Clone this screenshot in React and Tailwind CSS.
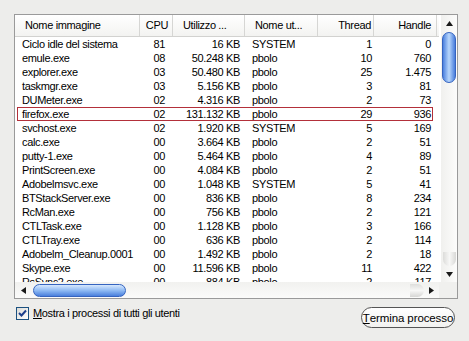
import React from "react";

const rows = [
  ["Ciclo idle del sistema", "81", "16 KB", "SYSTEM", "1", "0"],
  ["emule.exe", "08", "50.248 KB", "pbolo", "10", "760"],
  ["explorer.exe", "03", "50.480 KB", "pbolo", "25", "1.475"],
  ["taskmgr.exe", "03", "5.156 KB", "pbolo", "3", "81"],
  ["DUMeter.exe", "02", "4.316 KB", "pbolo", "2", "73"],
  ["firefox.exe", "02", "131.132 KB", "pbolo", "29", "936"],
  ["svchost.exe", "02", "1.920 KB", "SYSTEM", "5", "169"],
  ["calc.exe", "00", "3.664 KB", "pbolo", "2", "51"],
  ["putty-1.exe", "00", "5.464 KB", "pbolo", "4", "89"],
  ["PrintScreen.exe", "00", "4.084 KB", "pbolo", "2", "51"],
  ["Adobelmsvc.exe", "00", "1.048 KB", "SYSTEM", "5", "41"],
  ["BTStackServer.exe", "00", "836 KB", "pbolo", "8", "234"],
  ["RcMan.exe", "00", "756 KB", "pbolo", "2", "121"],
  ["CTLTask.exe", "00", "1.128 KB", "pbolo", "3", "166"],
  ["CTLTray.exe", "00", "636 KB", "pbolo", "2", "114"],
  ["Adobelm_Cleanup.0001", "00", "1.492 KB", "pbolo", "2", "18"],
  ["Skype.exe", "00", "11.596 KB", "pbolo", "11", "422"],
  ["RsSync2.exe", "00", "884 KB", "pbolo", "2", "117"],
];

const headCls = [
  "w-[125px] pl-[10px] text-left",
  "w-[33px] pr-[4px] text-right",
  "w-[72px] pl-[10px] text-left",
  "w-[73px] pl-[10px] text-left",
  "w-[56px] pr-[2px] text-right",
  "w-[63px] pr-[5px] text-right",
];
const cellCls = [
  "w-[125px] pl-[7px] text-left",
  "w-[33px] pr-[8px] text-right",
  "w-[72px] pr-[5px] text-right",
  "w-[73px] pl-[7px] text-left",
  "w-[56px] pr-[2px] text-right",
  "w-[63px] pr-[6px] text-right",
];
const heads = ["Nome immagine", "CPU", "Utilizzo ...", "Nome ut...", "Thread", "Handle"];

function Tri({ dir }) {
  const pts = {
    up: "0,5 3.5,0 7,5",
    down: "0,0 3.5,5 7,0",
    left: "5,0 0,3.5 5,7",
    right: "0,0 5,3.5 0,7",
  }[dir];
  const w = dir === "up" || dir === "down" ? 7 : 5;
  const h = dir === "up" || dir === "down" ? 5 : 7;
  return (
    <svg width={w} height={h} viewBox={`0 0 ${w} ${h}`}>
      <polygon points={pts} fill="#1a1a1a" />
    </svg>
  );
}

export default function App() {
  return (
    <div className="w-[469px] h-[341px] bg-[#ededeb] font-['Liberation_Sans',Arial,sans-serif] text-[11px] tracking-[-0.35px] text-black flex flex-col">
      <div className="pt-[14px] pl-[14px]">
        <div className="w-[444px] h-[285px] border border-[#9a9a9a] bg-white flex flex-col">
          <div className="flex h-[267px]">
            <div className="w-[424px] flex flex-col overflow-hidden">
              <div className="flex h-[22px] shrink-0 border-b border-[#d2d2d0] bg-gradient-to-b from-white to-[#f3f3f1]">
                {heads.map((h, i) => (
                  <div
                    key={i}
                    className={`${headCls[i]} h-full leading-[21px] border-r border-[#d6d6d4] shrink-0 whitespace-nowrap`}
                  >
                    {h}
                  </div>
                ))}
              </div>
              <div className="flex flex-col overflow-hidden">
                {rows.map((r, ri) => (
                  <div key={ri} className="relative flex h-[14px] leading-[14px] shrink-0">
                    {r.map((c, ci) => (
                      <div key={ci} className={`${cellCls[ci]} shrink-0 whitespace-nowrap overflow-hidden`}>
                        {c}
                      </div>
                    ))}
                    {ri === 5 && (
                      <span className="absolute left-[2px] right-[6px] top-0 bottom-0 border border-[#b3303a]" />
                    )}
                  </div>
                ))}
              </div>
            </div>
            <div className="w-[16px] flex flex-col bg-gradient-to-r from-[#f0f0ee] to-[#fcfcfb] ml-auto">
              <div className="h-[17px] flex items-center justify-center">
                <Tri dir="up" />
              </div>
              <div className="mx-auto w-[14px] h-[51px] rounded-full border border-[#3564c0] bg-gradient-to-r from-[#4c80de] via-[#b9d7fb] to-[#4a7ddb]" />
              <div className="flex-1" />
              <div className="mx-auto w-[13px] h-[14px] rounded-b-full bg-gradient-to-r from-[#dcdcda] via-[#f7f7f6] to-[#d9d9d7]" />
              <div className="h-[16px] flex items-center justify-center">
                <Tri dir="down" />
              </div>
            </div>
          </div>
          <div className="flex h-[16px]">
            <div className="flex-1 flex items-center bg-gradient-to-b from-[#f1f1ef] to-[#fbfbfa]">
              <div className="w-[16px] h-full flex items-center justify-center">
                <Tri dir="left" />
              </div>
              <div className="ml-[2px] w-[93px] h-[13px] rounded-full border border-[#3564c0] bg-gradient-to-b from-[#d7e8fd] via-[#8fbaf3] to-[#4a7fdc]" />
              <div className="flex-1" />
              <div className="w-[14px] h-[13px] rounded-r-full bg-gradient-to-b from-[#dededc] via-[#f7f7f6] to-[#d6d6d4]" />
              <div className="w-[15px] h-full flex items-center justify-center">
                <Tri dir="right" />
              </div>
            </div>
            <div className="w-[18px] bg-[#f0f0ee]" />
          </div>
        </div>
      </div>
      <div className="flex items-start pl-[16px] pr-[14px] pt-[7px]">
        <div className="mt-[1px] w-[13px] h-[13px] border border-[#1c5180] bg-gradient-to-br from-[#dcdcd7] to-white flex items-center justify-center">
          <svg width="9" height="9" viewBox="0 0 9 9">
            <path d="M1 4 L3.5 6.5 L8 1.5" fill="none" stroke="#1d3f8c" strokeWidth="2" />
          </svg>
        </div>
        <div className="ml-[4px] leading-[14px]">
          <span className="underline">M</span>ostra i processi di tutti gli utenti
        </div>
        <div className="ml-auto mt-[1px] w-[94px] h-[21px] rounded-full border border-[#555] bg-gradient-to-b from-white to-[#f2f2f0] flex items-center justify-center text-[11.5px] tracking-[-0.1px] leading-[14px]">
          <span className="underline">T</span>ermina processo
        </div>
      </div>
    </div>
  );
}
